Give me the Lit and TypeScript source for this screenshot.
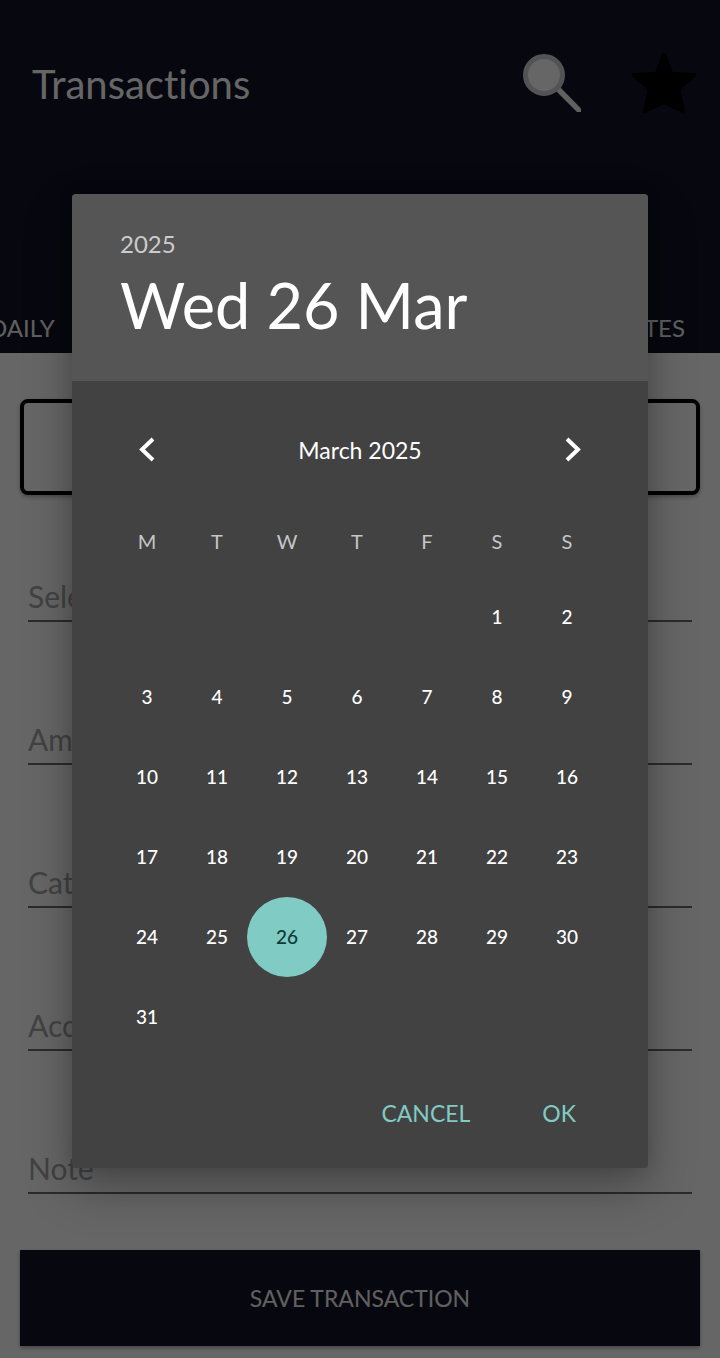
import { LitElement, html, css, nothing } from "lit";
import { customElement, state } from "lit/decorators.js";
import { classMap } from "lit/directives/class-map.js";

const WEEKDAYS = [
  ["M", "Monday"],
  ["T", "Tuesday"],
  ["W", "Wednesday"],
  ["T", "Thursday"],
  ["F", "Friday"],
  ["S", "Saturday"],
  ["S", "Sunday"],
];

@customElement("date-picker")
export class DatePicker extends LitElement {
  @state() private selected = new Date(2025, 2, 26);
  @state() private year = 2025;
  @state() private month = 2;

  static styles = css`
    :host {
      display: block;
      background: #424242;
      color: #fff;
      border-radius: 4px;
      overflow: hidden;
      box-shadow: 0 20px 48px rgba(0, 0, 0, 0.3), 0 0 16px rgba(0, 0, 0, 0.12);
    }
    button {
      font: inherit;
      color: inherit;
      background: none;
      border: 0;
      padding: 0;
      cursor: pointer;
    }
    .head {
      background: #555;
      padding: 34px 48px 36px;
    }
    .year {
      display: block;
      font-size: 24px;
      line-height: 32px;
      color: #ccc;
    }
    .date {
      margin: 0;
      padding-top: 5px;
      font-size: 63px;
      font-weight: 400;
      line-height: 80px;
      white-space: nowrap;
    }
    .months {
      display: flex;
      align-items: center;
      justify-content: space-between;
      height: 138px;
      padding: 0 51px;
    }
    .title {
      font-size: 23px;
      line-height: 32px;
    }
    .step {
      display: grid;
      place-items: center;
      width: 48px;
      height: 48px;
    }
    .step svg {
      display: block;
    }
    .body {
      padding: 0 46px 0 40px;
    }
    table {
      width: 100%;
      table-layout: fixed;
      border-collapse: collapse;
    }
    th {
      height: 44px;
      padding: 0 0 14px;
      font-size: 20px;
      font-weight: 400;
      color: #c6c6c6;
    }
    td {
      height: 80px;
      padding: 0;
      text-align: center;
    }
    .day {
      display: block;
      width: 80px;
      height: 80px;
      margin-inline: calc(50% - 40px);
      border-radius: 50%;
      font-size: 19px;
      font-weight: 500;
      line-height: 80px;
    }
    .selected {
      background: #80cbc4;
      color: #0c3a35;
    }
    .actions {
      display: flex;
      justify-content: flex-end;
      gap: 40px;
      padding: 32px 56px 31px 40px;
      color: #80cbc4;
      font-size: 23px;
    }
    .action {
      height: 48px;
      padding: 0 16px;
    }
  `;

  private move(delta: number) {
    const next = new Date(this.year, this.month + delta, 1);
    this.year = next.getFullYear();
    this.month = next.getMonth();
  }

  private weeks(): (number | null)[][] {
    const lead = (new Date(this.year, this.month, 1).getDay() + 6) % 7;
    const count = new Date(this.year, this.month + 1, 0).getDate();
    return Array.from({ length: 6 }, (_, row) =>
      Array.from({ length: 7 }, (_, col) => {
        const day = row * 7 + col - lead + 1;
        return day > 0 && day <= count ? day : null;
      })
    );
  }

  private isSelected(day: number) {
    return (
      this.selected.getTime() === new Date(this.year, this.month, day).getTime()
    );
  }

  render() {
    const s = this.selected;
    const weekday = s.toLocaleDateString("en-US", { weekday: "short" });
    const month = s.toLocaleDateString("en-US", { month: "short" });
    const title = new Date(this.year, this.month, 1).toLocaleDateString(
      "en-US",
      { month: "long", year: "numeric" }
    );
    return html`
      <header class="head">
        <button class="year">${s.getFullYear()}</button>
        <h2 class="date">${weekday} ${s.getDate()} ${month}</h2>
      </header>
      <div class="months">
        <button class="step" aria-label="Previous month" @click=${() => this.move(-1)}>
          <svg width="24" height="28" viewBox="0 0 24 28" fill="none" stroke="#fff" stroke-width="4">
            <path d="M18 3 7 13.500 18 24" />
          </svg>
        </button>
        <span class="title">${title}</span>
        <button class="step" aria-label="Next month" @click=${() => this.move(1)}>
          <svg width="24" height="28" viewBox="0 0 24 28" fill="none" stroke="#fff" stroke-width="4">
            <path d="M6 3 17 13.500 6 24" />
          </svg>
        </button>
      </div>
      <div class="body">
        <table>
          <thead>
            <tr>
              ${WEEKDAYS.map(([d, name]) => html`<th scope="col" abbr=${name}>${d}</th>`)}
            </tr>
          </thead>
          <tbody>
            ${this.weeks().map(
              (week) => html`<tr>
                ${week.map(
                  (day) => html`<td>
                    ${day === null
                      ? nothing
                      : html`<button
                          class=${classMap({ day: true, selected: this.isSelected(day) })}
                          @click=${() => (this.selected = new Date(this.year, this.month, day))}
                        >${day}</button>`}
                  </td>`
                )}
              </tr>`
            )}
          </tbody>
        </table>
      </div>
      <div class="actions">
        <button class="action">CANCEL</button>
        <button class="action">OK</button>
      </div>
    `;
  }
}

@customElement("app-root")
export class AppRoot extends LitElement {
  static styles = css`
    :host {
      display: block;
      position: relative;
      min-height: 100vh;
      overflow: hidden;
      background: #fff;
      font-family: Lato, "Open Sans", sans-serif;
      font-variant-ligatures: none;
    }
    button,
    input {
      font: inherit;
      color: inherit;
      background: none;
      border: 0;
      padding: 0;
      border-radius: 0;
    }
    .appbar {
      background: #121226;
      color: #fff;
    }
    .top {
      display: flex;
      align-items: center;
      height: 168px;
      padding: 0 20px 0 32px;
    }
    h1 {
      flex: 1;
      margin: 0;
      font-size: 40px;
      font-weight: 400;
      line-height: 48px;
    }
    .tools {
      display: flex;
      gap: 40px;
    }
    .tool,
    .tool svg {
      display: block;
      width: 72px;
      height: 72px;
    }
    .tabs {
      display: flex;
      justify-content: space-between;
      align-items: flex-end;
      height: 185px;
      margin-left: -11px;
      padding-right: 35px;
      font-size: 24px;
      color: #f0f0f0;
    }
    .tab {
      height: 52px;
    }
    .form {
      display: flex;
      flex-direction: column;
      padding: 46px 20px 12px;
    }
    .outlined {
      height: 96px;
      border: 4px solid #000;
      border-radius: 8px;
      box-shadow: 0 2px 4px rgba(0, 0, 0, 0.3);
    }
    .fields {
      display: grid;
      gap: 71px;
      margin: 55px 8px 56px;
    }
    .field {
      box-sizing: border-box;
      width: 100%;
      height: 72px;
      padding-top: 22px;
      border-bottom: 2px solid #6c6c6c;
      font-size: 30px;
    }
    .field::placeholder {
      color: #a6a6a6;
      opacity: 1;
    }
    .save {
      height: 96px;
      background: #121226;
      color: #f0f0f0;
      font-size: 23px;
      box-shadow: 0 2px 4px rgba(0, 0, 0, 0.35);
    }
    .scrim {
      position: absolute;
      inset: 0;
      display: grid;
      align-items: center;
      padding: 4px 10% 0;
      background: rgba(0, 0, 0, 0.6);
    }
  `;

  render() {
    return html`
      <header class="appbar">
        <div class="top">
          <h1>Transactions</h1>
          <div class="tools">
            <button class="tool" aria-label="Search">
              <svg viewBox="0 0 72 72">
                <path d="M43 38 65 60.500V64H61L39 42z" fill="#f0f0f0" />
                <circle cx="28" cy="27" r="18.500" fill="#fff" stroke="#d0d0d8" stroke-width="5" />
              </svg>
            </button>
            <button class="tool" aria-label="Favourites">
              <svg viewBox="0 0 72 72">
                <path
                  d="M36 7 43.500 26 66 27 50 41 55 63 36 54 17 63 22 41 6 27 28.500 26Z"
                  fill="#000" stroke="#000" stroke-width="4" stroke-linejoin="round"
                />
              </svg>
            </button>
          </div>
        </div>
        <nav class="tabs">
          <button class="tab">DAILY</button>
          <button class="tab">NOTES</button>
        </nav>
      </header>
      <main class="form">
        <button class="outlined" aria-label="Transaction type"></button>
        <div class="fields">
          ${["Select Date", "Amount", "Category", "Account", "Note"].map(
            (name) => html`<input class="field" type="text" aria-label=${name} placeholder=${name} />`
          )}
        </div>
        <button class="save">SAVE TRANSACTION</button>
      </main>
      <div class="scrim">
        <date-picker role="dialog" aria-modal="true" aria-label="Choose a date"></date-picker>
      </div>
    `;
  }
}
